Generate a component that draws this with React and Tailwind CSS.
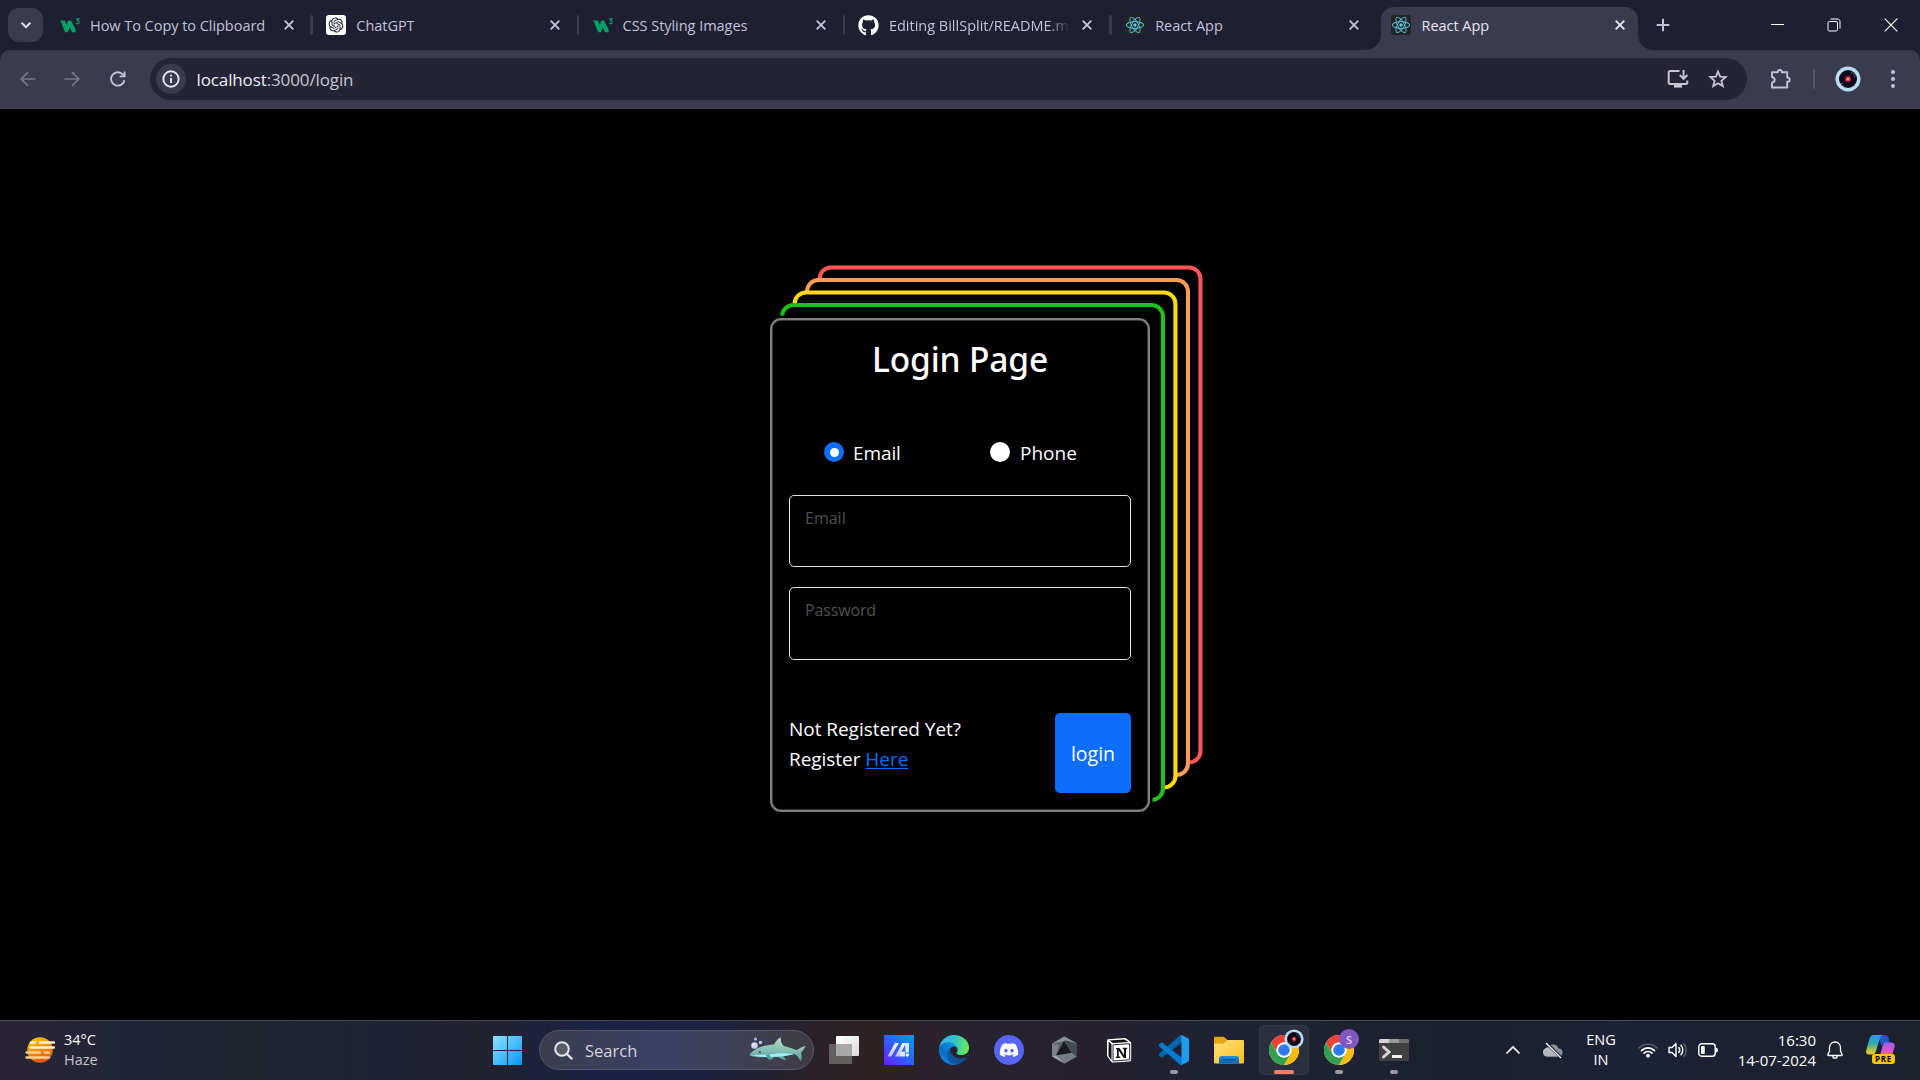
import { RiOpenaiFill } from "react-icons/ri";
import { FaGithub, FaDiscord } from "react-icons/fa";
import { SiReact } from "react-icons/si";

/* ---------- favicons ---------- */
const W3 = () => (
  <svg viewBox="0 0 20 20" className="size-5">
    <path d="M0.3 5.5H4.6L6.6 9.6L8.4 5.5H11L15.6 14.6V17.2H12L9.8 12.6L7.8 17.2H5.2Z" fill="#04a068" />
    <path d="M16.2 3.9H19L17.4 5.8C18.6 5.8 19.4 6.6 19.2 7.6C19 8.9 17 9.2 16 8.2" fill="none" stroke="#04a068" strokeWidth="1.1" />
  </svg>
);
const ChatGPT = () => (
  <span className="flex size-5 items-center justify-center rounded-[3px] bg-white text-[#202123]">
    <RiOpenaiFill size={18} />
  </span>
);
const ReactFav = () => (
  <span className="flex size-5 items-center justify-center rounded-[3px] bg-[#222426] text-[#5ccfe8]">
    <SiReact size={18} />
  </span>
);
const GitHub = () => <FaGithub size={21} className="-ml-px text-white" />;

const tabs = [
  { title: "How To Copy to Clipboard", icon: <W3 /> },
  { title: "ChatGPT", icon: <ChatGPT /> },
  { title: "CSS Styling Images", icon: <W3 /> },
  { title: "Editing BillSplit/README.md", icon: <GitHub />, fade: true },
  { title: "React App", icon: <ReactFav /> },
  { title: "React App", icon: <ReactFav />, active: true },
];

const Cross = () => (
  <svg viewBox="0 0 16 16" className="-ml-px size-4 shrink-0">
    <path d="M3.7 3.7l8.6 8.6M12.3 3.7l-8.6 8.6" stroke="currentColor" strokeWidth="1.9" />
  </svg>
);

function Tab({ title, icon, active, fade }) {
  return (
    <div className={active ? "relative h-[50px] w-[257px] shrink-0 text-[#e6e4f0]" : "relative h-[50px] w-[257px] shrink-0 text-[#c3c0dc]"}>
      {active && (
        <>
          <div className="absolute inset-x-0 top-[7px] bottom-0 rounded-t-[13px] bg-[#3b3b4f]" />
          <svg viewBox="0 0 15 15" className="absolute bottom-0 -left-[15px] size-[15px]">
            <path d="M15 0V15H0C8 15 15 8 15 0Z" fill="#3b3b4f" />
          </svg>
          <svg viewBox="0 0 15 15" className="absolute -right-[15px] bottom-0 size-[15px]">
            <path d="M0 0V15H15C7 15 0 8 0 0Z" fill="#3b3b4f" />
          </svg>
        </>
      )}
      <div className="relative flex h-full items-center gap-[10px] pr-[10.500px] pl-[10px]">
        <span className="size-5 shrink-0">{icon}</span>
        <span
          className={
            fade
              ? "min-w-0 flex-1 overflow-hidden pt-[2px] text-[14.5px] whitespace-nowrap [mask-image:linear-gradient(to_right,#000_88%,transparent_100%)]"
              : "min-w-0 flex-1 overflow-hidden pt-[2px] text-[14.5px] tracking-[-0.04px] whitespace-nowrap"
          }
        >
          {title}
        </span>
        <Cross />
      </div>
    </div>
  );
}

function TabStrip() {
  return (
    <div className="flex h-[50px] bg-[#1e1f30]">
      <div className="mt-2 ml-2 flex h-[34px] w-[35px] items-center justify-center rounded-[11px] bg-[#3b3b4f]">
        <svg viewBox="0 0 14 14" className="size-[14px]">
          <path d="M2.6 4.7L7 9.1L11.4 4.7" fill="none" stroke="#e6e4f0" strokeWidth="2" />
        </svg>
      </div>
      <div className="ml-[7px] flex">
        {tabs.map((t, i) => (
          <div key={i} className="flex items-center">
            {i > 0 && (
              <div className="flex w-[9.3px] justify-center">
                {!t.active && <span className="h-5 w-[2.5px] rounded-full bg-[#3b3b4f]" />}
              </div>
            )}
            <Tab {...t} />
          </div>
        ))}
      </div>
      <svg viewBox="0 0 14 14" className="mt-[18px] ml-[18px] size-[14px]">
        <path d="M7 .7V13.3M.7 7H13.3" stroke="#c3c0dc" strokeWidth="2" />
      </svg>
      <div className="ml-auto flex h-[49px] text-white">
        <div className="flex w-[57px] items-center justify-center">
          <div className="h-px w-[13px] bg-white" />
        </div>
        <div className="flex w-[56px] items-center justify-center">
          <svg viewBox="0 0 14 14" className="size-[14px]">
            <rect x="1" y="3.5" width="9.5" height="9.5" rx="1.4" fill="none" stroke="currentColor" />
            <path d="M3.5 1H10.3C12 1 13 2 13 3.7V10.5" fill="none" stroke="currentColor" />
          </svg>
        </div>
        <div className="flex w-[58px] items-center justify-center">
          <svg viewBox="0 0 14 14" className="size-[14px]">
            <path d="M.7 .7L13.3 13.3M13.3 .7L.7 13.3" stroke="currentColor" strokeWidth="1.1" />
          </svg>
        </div>
      </div>
    </div>
  );
}

const ProfilePhoto = ({ className }) => (
  <svg viewBox="0 0 26 26" className={className}>
    <circle cx="13" cy="13" r="12.5" fill="#b9dcf5" />
    <circle cx="13" cy="13" r="9" fill="#0c081c" />
    <path d="M16 6.5l3 1.5l1 3M6.500 17l2 3" stroke="#5d5c70" strokeWidth="1.6" strokeDasharray="1.500 1" fill="none" />
    <circle cx="13" cy="13" r="3.4" fill="#70122f" />
    <circle cx="13" cy="13" r="2.300" fill="#f0405a" />
    <circle cx="13" cy="13" r="1.100" fill="#ffc93c" />
  </svg>
);

function Toolbar() {
  return (
    <div className="bg-[#1e1f30]">
      <div className="flex h-[59px] items-center rounded-t-[10px] border-b border-[#42424f] bg-[#3b3b4f] text-[#c3c0dc]">
        <svg viewBox="0 0 16 16" className="ml-[20px] size-4 text-[#77768a]">
          <path d="M15.500 8H1.500M8 1.200L1.200 8L8 14.800" fill="none" stroke="currentColor" strokeWidth="1.700" />
        </svg>
        <svg viewBox="0 0 16 16" className="ml-[28px] size-4 text-[#77768a]">
          <path d="M.5 8H14.500M8 1.200L14.800 8L8 14.800" fill="none" stroke="currentColor" strokeWidth="1.700" />
        </svg>
        <svg viewBox="0 0 16 16" className="ml-[30px] size-4">
          <path d="M14.400 9.200A6.700 6.700 0 1 1 12.800 3.400L14.600 5.300" fill="none" stroke="currentColor" strokeWidth="1.900" />
          <path d="M15.500 .4V6.300H9.600V4.500H13.700V.4Z" fill="currentColor" />
        </svg>
        <div className="ml-[24px] flex h-[42px] w-[1597px] items-center rounded-full bg-[#242435]">
          <span className="ml-[6px] flex size-[30px] items-center justify-center rounded-full bg-[#3b3b4f]">
            <svg viewBox="0 0 18 18" className="size-[18px]">
              <circle cx="9" cy="9" r="7.700" fill="none" stroke="#e9e6f2" strokeWidth="1.900" />
              <path d="M9 8v5M9 4.700v1.900" stroke="#e9e6f2" strokeWidth="1.900" />
            </svg>
          </span>
          <span className="ml-[10.500px] pt-px text-[17px] tracking-[-0.12px] text-[#c7c5d0]">
            <span className="text-[#efedf7]">localhost</span>:3000/login
          </span>
          <svg viewBox="0 0 22 20" className="ml-auto h-5 w-[22px] text-[#c9c5d0]">
            <path d="M12.500 2H3.200C2.200 2 1.700 2.500 1.700 3.500V13.500C1.700 14.500 2.200 15 3.200 15H18.800C19.800 15 20.300 14.500 20.300 13.500V11.500" fill="none" stroke="currentColor" strokeWidth="2" />
            <path d="M7 15H15V18.600H7Z" fill="currentColor" />
            <path d="M16.600 1V9M12.800 6L16.600 9.800L20.400 6" fill="none" stroke="currentColor" strokeWidth="1.900" />
          </svg>
          <svg viewBox="0 0 20 20" className="mr-[19.500px] ml-[19px] size-5 text-[#c9c5d0]">
            <path d="M10 2.600L12.100 7.700L17.700 8.100L13.400 11.700L14.800 17.100L10 14.200L5.200 17.100L6.600 11.700L2.300 8.100L7.900 7.700Z" fill="none" stroke="currentColor" strokeWidth="1.800" />
          </svg>
        </div>
        <svg viewBox="0 0 22 22" className="ml-[23px] size-[22px]">
          <path d="M2 4.200H7.800C7.800 1.200 11.800 1.200 11.800 4.200H17.200V9.500C20.600 9.500 20.600 13.800 17.200 13.800V19.500H2V14.800C5.600 14 5.600 9.700 2 9Z" fill="none" stroke="currentColor" strokeWidth="1.900" strokeLinejoin="round" />
        </svg>
        <span className="ml-[21px] h-5 w-[2px] rounded-full bg-[#55556b]" />
        <ProfilePhoto className="ml-[20px] size-[26px]" />
        <span className="ml-[29.500px] flex flex-col gap-[3px]">
          <i className="size-1 rounded-full bg-current" />
          <i className="size-1 rounded-full bg-current" />
          <i className="size-1 rounded-full bg-current" />
        </span>
      </div>
    </div>
  );
}

/* ---------- login card ---------- */
function LoginCard() {
  return (
    <div className="mt-[209px] flex h-[494px] w-[380px] flex-col rounded-[11px] border-[2px] border-[#808080] bg-black px-[17px] text-white shadow-[inset_0_0_0_0.75px_#4a4a4a,0_0_0_2.5px_#000,12.5px_-12.5px_0_-1.6px_#000,12.5px_-12.5px_0_2.5px_#1fc11b,25px_-25px_0_-1.6px_#000,25px_-25px_0_2.5px_#ffd913,37.5px_-37.5px_0_-1.6px_#000,37.5px_-37.5px_0_2.5px_#ff9c55,50px_-50px_0_-1.6px_#000,50px_-50px_0_2.5px_#ff5555]">
      <h1 className="mt-[18px] text-center font-['Noto_Sans'] text-[33.5px] leading-[42px] font-medium tracking-[-0.15px]">Login Page</h1>
      <div className="mt-[57px] flex h-[30px] items-center pl-[35px] text-[19px] leading-[30px]">
        <label className="flex w-[166px] items-center gap-[9px]">
          <span className="flex size-5 items-center justify-center rounded-full bg-[#0d6efd]">
            <i className="size-[9px] rounded-full bg-white" />
          </span>
          <span className="pt-px tracking-[-0.1px]">Email</span>
        </label>
        <label className="flex items-center gap-[10px]">
          <span className="size-5 rounded-full bg-white" />
          <span className="pt-px">Phone</span>
        </label>
      </div>
      <div className="mt-[28px] h-[72px] rounded-[5px] border border-[#dee2e6] px-[15px] pt-[10px] text-[16px] leading-6 text-[#515151]">Email</div>
      <div className="mt-[20px] h-[73px] rounded-[5px] border border-[#dee2e6] px-[15px] pt-[10px] text-[16px] leading-6 tracking-[-0.15px] text-[#515151]">Password</div>
      <div className="mt-[53px] flex justify-between">
        <p className="pt-px text-[19px] leading-[30px] tracking-[-0.04px]">
          Not Registered Yet?
          <br />
          Register <a className="text-[#0d6efd] underline underline-offset-2">Here</a>
        </p>
        <button className="h-[80px] w-[76px] rounded-[5px] bg-[#0d6efd] pt-px text-[19.5px]">login</button>
      </div>
    </div>
  );
}

/* ---------- taskbar icons ---------- */
const Haze = () => (
  <svg viewBox="0 0 30 26" className="h-[26px] w-[30px]">
    <defs>
      <linearGradient id="sun" x1="0" y1="0" x2=".5" y2="1">
        <stop offset="0" stopColor="#ffcf12" />
        <stop offset="1" stopColor="#e8590c" />
      </linearGradient>
    </defs>
    <circle cx="15" cy="13" r="12.800" fill="url(#sun)" />
    <g stroke="#fff3cf" strokeWidth="2.400" strokeLinecap="round">
      <path d="M6 5.500H10M15 5.500H29M5.500 10.500H29" />
      <path d="M1.500 15.500H15M20 15.500H24M1.500 20.500H24" stroke="#f1d291" />
    </g>
  </svg>
);
const Start = () => (
  <svg viewBox="0 0 29 29" className="size-[29px]">
    <defs>
      <linearGradient id="win" x1="0" y1="0" x2="29" y2="29" gradientUnits="userSpaceOnUse">
        <stop offset="0" stopColor="#8be3ff" />
        <stop offset="1" stopColor="#0a96fb" />
      </linearGradient>
    </defs>
    <path d="M0 1Q0 0 1 0H14V14H0ZM15 0H28Q29 0 29 1V14H15ZM0 15H14V29H1Q0 29 0 28ZM15 15H29V28Q29 29 28 29H15Z" fill="url(#win)" />
  </svg>
);
const Shark = () => (
  <svg viewBox="0 0 57 26" className="h-[26px] w-[57px]">
    <defs>
      <linearGradient id="shark" x1="0" y1="0" x2="0" y2="1">
        <stop offset="0" stopColor="#b9d7bd" />
        <stop offset=".55" stopColor="#84bfb4" />
        <stop offset="1" stopColor="#4b9aa5" />
      </linearGradient>
    </defs>
    <path d="M0 18C7 10 15 8.500 25 7.500C27 4 29 1 32 .5C31.500 4 32.500 7 35 9C40 10 44 12 47 13C49 13 53 9 57 9C55 12 53 14 52 16C53 19 53 22 51.500 24.500C50 21 48 18 45 17C41 18 37 19 34 19.500C36 21 37 22 37 23C34 23 31 21.500 29 20H25C24 21.500 22 23 20 22.500L17 20C11 20.500 4 20.500 0 18Z" fill="url(#shark)" />
    <path d="M2 18C10 17.500 20 18 28 16.500C34 16 40 16.500 45 17C36 19.500 22 20.500 10 19.500Z" fill="#9ff0ee" />
    <path d="M20 17L23 22.500H20L16.500 18Z" fill="#4c9ca8" />
    <path d="M10 14.500l1.800 1.200" stroke="#8d3038" strokeWidth="1.800" />
    <circle cx="5.500" cy="8.500" r="3.300" fill="#c3cff5" />
    <circle cx="4.600" cy="7.600" r="1.300" fill="#f3f0ff" />
    <circle cx="6.500" cy="2" r="1.500" fill="#a9bff0" />
    <circle cx="11.500" cy="5.500" r="1.800" fill="#b4bdea" />
  </svg>
);
const TaskView = () => (
  <svg viewBox="0 0 30 28" className="h-7 w-[30px]">
    <defs>
      <linearGradient id="tv" x1="0" y1="0" x2="1" y2="1">
        <stop offset="0" stopColor="#fff" />
        <stop offset="1" stopColor="#dcdcdc" />
      </linearGradient>
    </defs>
    <rect x="0" y="8" width="23" height="20" rx="1" fill="#62605f" />
    <rect x="7" y="0" width="23" height="20" rx="1" fill="url(#tv)" />
    <rect x="7" y="8" width="16" height="12" fill="#a8a8a8" />
  </svg>
);
const MyAsus = () => (
  <svg viewBox="0 0 30 30" className="size-[30px]">
    <defs>
      <linearGradient id="asus" x1="0" y1="1" x2="1" y2="0">
        <stop offset="0" stopColor="#6a1cff" />
        <stop offset=".5" stopColor="#2b63fb" />
        <stop offset="1" stopColor="#009dff" />
      </linearGradient>
      <linearGradient id="asusm" x1="0" y1="0" x2="0" y2="1">
        <stop offset="0" stopColor="#ffffff" />
        <stop offset="1" stopColor="#b9b8ff" />
      </linearGradient>
    </defs>
    <rect width="30" height="30" fill="url(#asus)" />
    <path d="M3.500 21.500L11 8H14.800L7.300 21.500Z" fill="url(#asusm)" />
    <path d="M11 21.500L18.500 8H22L14.800 21.500Z" fill="url(#asusm)" />
    <path d="M21 8H25V17.500H21.500ZM17 16.500H21V21.500H14.800Z" fill="#dfe4ff" />
    <circle cx="23.300" cy="20" r="1.700" fill="#fff" />
  </svg>
);
const Edge = () => (
  <svg viewBox="0 0 256 256" className="size-[30px]">
    <defs>
      <linearGradient id="e1" x1="63" y1="177" x2="241" y2="177" gradientUnits="userSpaceOnUse">
        <stop offset="0" stopColor="#0c59a4" />
        <stop offset="1" stopColor="#114a8b" />
      </linearGradient>
      <linearGradient id="e2" x1="157" y1="99" x2="46" y2="220" gradientUnits="userSpaceOnUse">
        <stop offset="0" stopColor="#1b9de2" />
        <stop offset=".67" stopColor="#0b6bc4" />
        <stop offset="1" stopColor="#0883d9" />
      </linearGradient>
      <linearGradient id="e3" x1="20" y1="60" x2="250" y2="110" gradientUnits="userSpaceOnUse">
        <stop offset="0" stopColor="#35b5ee" />
        <stop offset=".5" stopColor="#36c6c8" />
        <stop offset="1" stopColor="#6bea4c" />
      </linearGradient>
    </defs>
    <path d="M231 190a94 94 0 0 1-10 5 102 102 0 0 1-36 6c-47 0-89-33-89-75a31 31 0 0 1 17-27c-43 2-54 46-54 72 0 74 68 81 82 81 8 0 20-2 27-5l1 0a128 128 0 0 0 67-53 4 4 0 0 0-5-4z" fill="url(#e1)" />
    <path d="M106 241a79 79 0 0 1-23-21 81 81 0 0 1 30-120c3-2 8-4 16-4a32 32 0 0 1 25 13 32 32 0 0 1 6 19c0-1 25-80-80-80-44 0-80 42-80 79a130 130 0 0 0 12 56 128 128 0 0 0 156 67 75 75 0 0 1-62-9z" fill="url(#e2)" />
    <path d="M152 149c-1 1-3 3-3 6 0 3 2 5 5 7 14 10 41 9 42 9a59 59 0 0 0 30-8 61 61 0 0 0 30-53c0-22-8-37-11-43C225 25 178 0 128 0A128 128 0 0 0 0 126c0-37 37-66 80-66 4 0 24 0 42 10 16 8 24 18 30 28 6 11 7 24 7 29 0 6-3 13-7 22z" fill="url(#e3)" />
  </svg>
);
const Discord = () => (
  <span className="flex size-[30px] items-center justify-center rounded-full bg-[#5865f2] text-white">
    <FaDiscord size={20} />
  </span>
);
const Armoury = () => (
  <svg viewBox="0 0 27 28" className="h-7 w-[27px]">
    <path d="M13.500 .5L26 7.500V20.500L13.500 27.500L1 20.500V7.500Z" fill="#5a6068" />
    <path d="M13.500 .5L26 7.500L13.500 5L1 7.500Z" fill="#8b9299" />
    <path d="M1 7.500L8 9L5 20L1 20.500Z" fill="#7b8289" />
    <path d="M26 7.500V20.500L20 16L13.500 4Z" fill="#434a52" />
    <path d="M13 5L20.500 17L5 19.500Z" fill="#181a1e" />
    <path d="M5 19.500L20.500 17L26 20.500L13.500 27.500Z" fill="#747d83" />
    <path d="M5 19.500L13.500 27.500L1 20.500Z" fill="#a1a7aa" />
  </svg>
);
const Notion = () => (
  <svg viewBox="0 0 26 27" className="h-[27px] w-[26px]">
    <path d="M1 3.500Q1 2.500 2 2.300L18.500 1Q19.500 1 20.500 1.700L24.500 4.700Q25.200 5.300 25.200 6.200V22.500Q25.200 24.300 23.500 24.500L7.500 25.600Q6.200 25.700 5.300 24.700L1.700 20Q1 19 1 18Z" fill="#fff" />
    <path d="M2.700 4.500L5.500 7.300V23L2.500 19Z" fill="#111" />
    <path d="M3.300 3.500L18.500 2.400L22.500 5L7 6Z" fill="#111" />
    <path d="M7 7.800L23.700 6.700V22.800L7 24Z" fill="#fff" stroke="#111" strokeWidth=".9" />
    <path d="M10 11H13.500L18 18V12.300L16.700 12V10.800H21.200V12L20 12.300V21H17.700L12.700 13.500V19.500L14.300 19.800V21H9.800V19.800L11 19.500V12.300L10 12Z" fill="#111" />
  </svg>
);
const VSCode = () => (
  <svg viewBox="0 0 100 100" className="size-[30px]">
    <path d="M96 11L76 1A6 6 0 0 0 69 2L1 62A4 4 0 0 0 1 69L7 74A4 4 0 0 0 12 74L93 12C96 10 100 12 100 16Z" fill="#0065a9" />
    <path d="M96 89L76 99A6 6 0 0 1 69 98L1 38A4 4 0 0 1 1 31L7 26A4 4 0 0 1 12 26L93 88C96 90 100 88 100 84Z" fill="#007acc" />
    <path d="M76 99A6 6 0 0 1 69 98C71 100 75 99 75 95V5C75 1 71 0 69 2A6 6 0 0 1 76 1L96 11A6 6 0 0 1 100 16V84A6 6 0 0 1 96 89Z" fill="#1f9cf0" />
  </svg>
);
const Folder = () => (
  <svg viewBox="0 0 30 28" className="h-7 w-[30px]">
    <defs>
      <linearGradient id="fold" x1="0" y1="0" x2="1" y2="1">
        <stop offset="0" stopColor="#ffe27a" />
        <stop offset="1" stopColor="#fcbf22" />
      </linearGradient>
      <linearGradient id="foldb" x1="0" y1="0" x2="0" y2="1">
        <stop offset="0" stopColor="#1f8fdf" />
        <stop offset="1" stopColor="#0560b5" />
      </linearGradient>
    </defs>
    <path d="M0 2Q0 .8 1.200 .8H9Q10 .8 10.700 1.500L13.500 4H20V12H0Z" fill="#e8a511" />
    <path d="M0 7.500H10L13.500 4H29Q30 4 30 5V26.500Q30 27.500 29 27.500H1Q0 27.500 0 26.500Z" fill="url(#fold)" />
    <path d="M5 27.500V22.500Q5 20 7.500 20H22.500Q25 20 25 22.500V27.500Z" fill="url(#foldb)" />
    <path d="M8.500 23.800H21.500" stroke="#0a4a94" strokeWidth="1.200" />
  </svg>
);
const Chrome = ({ children }) => (
  <span className="relative">
    <svg viewBox="0 0 48 48" className="size-[30px]">
      <circle cx="24" cy="24" r="24" fill="#fff" />
      <path d="M3.200 12A24 24 0 0 1 44.800 12H24A12 12 0 0 0 13.600 30Z" fill="#ea4335" />
      <path d="M44.800 12A24 24 0 0 1 24 48L34.400 30A12 12 0 0 0 24 12Z" fill="#fbbc05" />
      <path d="M3.200 12L13.600 30A12 12 0 0 0 34.400 30L24 48A24 24 0 0 1 3.200 12Z" fill="#30a04c" />
      <circle cx="24" cy="24" r="12" fill="#fff" />
      <circle cx="24" cy="24" r="9.300" fill="#2f7bee" />
    </svg>
    <span className="absolute -top-[6px] -right-[5px]">{children}</span>
  </span>
);
const Terminal = () => (
  <svg viewBox="0 0 30 22" className="h-[22px] w-[30px]">
    <rect width="30" height="22" rx="1.500" fill="#414141" />
    <path d="M0 1.500Q0 0 1.500 0H10V4H0Z" fill="#d2d2d2" />
    <path d="M10 0H20V4H10Z" fill="#9b9b9b" />
    <path d="M20 0H28.500Q30 0 30 1.500V4H20Z" fill="#6e6e6e" />
    <path d="M4.500 8L10 13L4.500 18" fill="none" stroke="#d5d5d5" strokeWidth="3" strokeLinecap="round" />
    <rect x="13" y="16" width="10" height="3" fill="#f0f0f0" />
  </svg>
);

const apps = [
  { icon: <TaskView /> },
  { icon: <MyAsus /> },
  { icon: <Edge /> },
  { icon: <Discord /> },
  { icon: <Armoury /> },
  { icon: <Notion /> },
  { icon: <VSCode />, open: true },
  { icon: <Folder /> },
  { icon: <Chrome><ProfilePhoto className="size-[20px]" /></Chrome>, active: true },
  {
    icon: (
      <Chrome>
        <span className="flex size-[20px] items-center justify-center rounded-full bg-[#7e57c2] text-[11px] leading-none font-semibold text-[#e2d6f5]">S</span>
      </Chrome>
    ),
    open: true,
  },
  { icon: <Terminal />, open: true },
];

function Tray() {
  return (
    <div className="ml-auto flex h-full items-center text-[15px] leading-5 text-white">
      <svg viewBox="0 0 14 10" className="h-[10px] w-[14px]">
        <path d="M1 8L7 2L13 8" fill="none" stroke="currentColor" strokeWidth="1.700" strokeLinecap="round" />
      </svg>
      <svg viewBox="0 0 20 17" className="ml-[23px] h-[17px] w-5">
        <path d="M5 14.500A4.500 4.500 0 0 1 4.500 5.800A6 6 0 0 1 15.500 6.500A4 4 0 0 1 15.500 14.500Z" fill="#8d8f99" />
        <path d="M0 11A4.500 4.500 0 0 1 7 6.500L16 14.500H4.500A4 4 0 0 1 0 11Z" fill="#b4b6bd" />
        <path d="M3.500 1L18.500 16" stroke="#1c2236" strokeWidth="3" />
        <path d="M3 1L18 16" stroke="#fff" strokeWidth="1.200" />
      </svg>
      <div className="ml-[20px] w-9 text-center text-[14.500px]">
        ENG
        <br />
        IN
      </div>
      <svg viewBox="0 0 20 16" className="ml-[19px] h-4 w-5" fill="none" strokeLinecap="round">
        <path d="M1 6A12.500 12.500 0 0 1 19 6" stroke="#5d6270" strokeWidth="1.400" />
        <path d="M3.500 8.600A9 9 0 0 1 16.500 8.600M6 11.200A5.600 5.600 0 0 1 14 11.200" stroke="#fff" strokeWidth="1.700" />
        <circle cx="10" cy="13.700" r="1.900" fill="#fff" />
      </svg>
      <svg viewBox="0 0 20 16" className="ml-[10px] h-4 w-5" fill="none" strokeLinecap="round" strokeLinejoin="round">
        <path d="M1 5.500H4L8 1.500V14.500L4 10.500H1Z" stroke="#fff" strokeWidth="1.400" />
        <path d="M10.800 5.500A4 4 0 0 1 10.800 10.500M13 3.300A7 7 0 0 1 13 12.700" stroke="#fff" strokeWidth="1.400" />
        <path d="M15.800 1.500A10 10 0 0 1 15.800 14.500" stroke="#5d6270" strokeWidth="1.400" />
      </svg>
      <svg viewBox="0 0 20 14" className="ml-[10px] h-[14px] w-5">
        <rect x=".8" y=".8" width="16.400" height="12.400" rx="2.800" fill="none" stroke="#fff" strokeWidth="1.400" />
        <rect x="3" y="3" width="3.800" height="8" rx="1" fill="#fff" />
        <path d="M18 4.500Q20 5 20 7T18 9.500Z" fill="#fff" />
      </svg>
      <div className="ml-[10px] w-[88px] text-right">
        16:30
        <br />
        14-07-2024
      </div>
      <svg viewBox="0 0 16 18" className="ml-[11px] h-[18px] w-4" fill="none" stroke="currentColor" strokeWidth="1.300" strokeLinejoin="round">
        <path d="M8 1A5.500 5.500 0 0 1 13.500 6.500V10L15.200 13.700Q15.300 14.500 14.500 14.500H1.500Q.7 14.500 .8 13.700L2.500 10V6.500A5.500 5.500 0 0 1 8 1ZM5.800 15A2.200 2.200 0 0 0 10.200 15" />
      </svg>
      <div className="relative mr-[25px] ml-[23px] h-[30px] w-[29px]">
        <svg viewBox="0 0 29 24" className="h-6 w-[29px]">
          <defs>
            <linearGradient id="cp1" x1="0" y1="0" x2="0" y2="1">
              <stop offset="0" stopColor="#18a0f5" />
              <stop offset=".45" stopColor="#33a8b0" />
              <stop offset=".75" stopColor="#a8c53c" />
              <stop offset="1" stopColor="#f3c62c" />
            </linearGradient>
            <linearGradient id="cp2" x1="0" y1="0" x2="0" y2="1">
              <stop offset="0" stopColor="#a05cf0" />
              <stop offset=".5" stopColor="#d957b8" />
              <stop offset="1" stopColor="#fb8350" />
            </linearGradient>
          </defs>
          <path d="M12 0H19Q21.500 0 22.300 2.500L24 8H19Q16.500 8 15.500 11L12 0Z" fill="#1b57cf" />
          <path d="M7.500 0H17Q14.500 1 13.500 4.500L10 16Q9 19.500 6 19.500H3Q-.7 19.500 .3 15L3.500 3.500Q4.500 0 7.500 0Z" fill="url(#cp1)" />
          <path d="M19 7.500H25.500Q29.500 7.500 28.500 12L26.500 19Q25 24 21 24H10Q13.500 23 14.500 19L16.500 11Q17.500 7.500 19 7.500Z" fill="url(#cp2)" />
        </svg>
        <span className="absolute bottom-px left-[6px] flex h-[10px] w-[23px] items-center justify-center rounded-[3px] bg-[#fdc500] text-[8px] leading-none font-bold tracking-[0.7px] text-black">
          PRE
        </span>
      </div>
    </div>
  );
}

function Taskbar() {
  return (
    <div className="flex h-[60px] items-center border-t border-[#484a55] bg-[linear-gradient(to_right,#2a2434_0%,#21253a_7%,#20252f_12.5%,#1f2337_20%,#22222f_25%,#1a2245_31%,#1c2140_37%,#282229_42%,#2e2224_45%,#262230_51%,#26212d_57%,#1e2233_63%,#1e2230_71%,#1c202c_77%,#1c2237_84%,#1c222c_100%)] pb-px">
      <div className="flex w-[480px] items-center pl-[25px] text-[14.5px] leading-[20px] text-white">
        <Haze />
        <div className="ml-[9px]">
          34°C
          <br />
          <span className="text-[#c5c6cb]">Haze</span>
        </div>
      </div>
      <div className="flex w-[54px] justify-center">
        <Start />
      </div>
      <div className="ml-[5px] flex h-10 w-[275px] items-center rounded-full border border-[#55566a] bg-[linear-gradient(to_right,#3b3c4e,#3a4166_45%,#3f4054_75%,#3f3b41)] pr-[7px] pl-[14px]">
        <svg viewBox="0 0 19 19" className="size-[19px]">
          <circle cx="8" cy="8" r="6.800" fill="#5b5c6b" stroke="#e4e4ea" strokeWidth="2" />
          <path d="M13 13L17.500 17.500" stroke="#e4e4ea" strokeWidth="2.400" strokeLinecap="round" />
        </svg>
        <span className="ml-3 pt-[2px] text-[16.5px] text-[#d3d4dc]">Search</span>
        <span className="ml-auto">
          <Shark />
        </span>
      </div>
      <div className="ml-[2.500px] flex">
        {apps.map((a, i) => (
          <div key={i} className="flex w-[55px] justify-center">
            <div className={a.active ? "relative flex size-[50px] items-center justify-center rounded-[5px] border border-[#363a4a] bg-[#2b2f3e]" : "relative flex size-[50px] items-center justify-center"}>
              {a.icon}
              {a.active && <span className="absolute bottom-0 h-1 w-5 rounded-full bg-[#f77f66]" />}
              {a.open && <span className="absolute bottom-px h-1 w-2 rounded-full bg-[#9a9ba3]" />}
            </div>
          </div>
        ))}
      </div>
      <Tray />
    </div>
  );
}

export default function App() {
  return (
    <div className="flex h-[1080px] w-[1920px] flex-col overflow-hidden bg-black font-['Open_Sans','Noto_Sans',sans-serif]">
      <TabStrip />
      <Toolbar />
      <main className="flex flex-1 justify-center">
        <LoginCard />
      </main>
      <Taskbar />
    </div>
  );
}
